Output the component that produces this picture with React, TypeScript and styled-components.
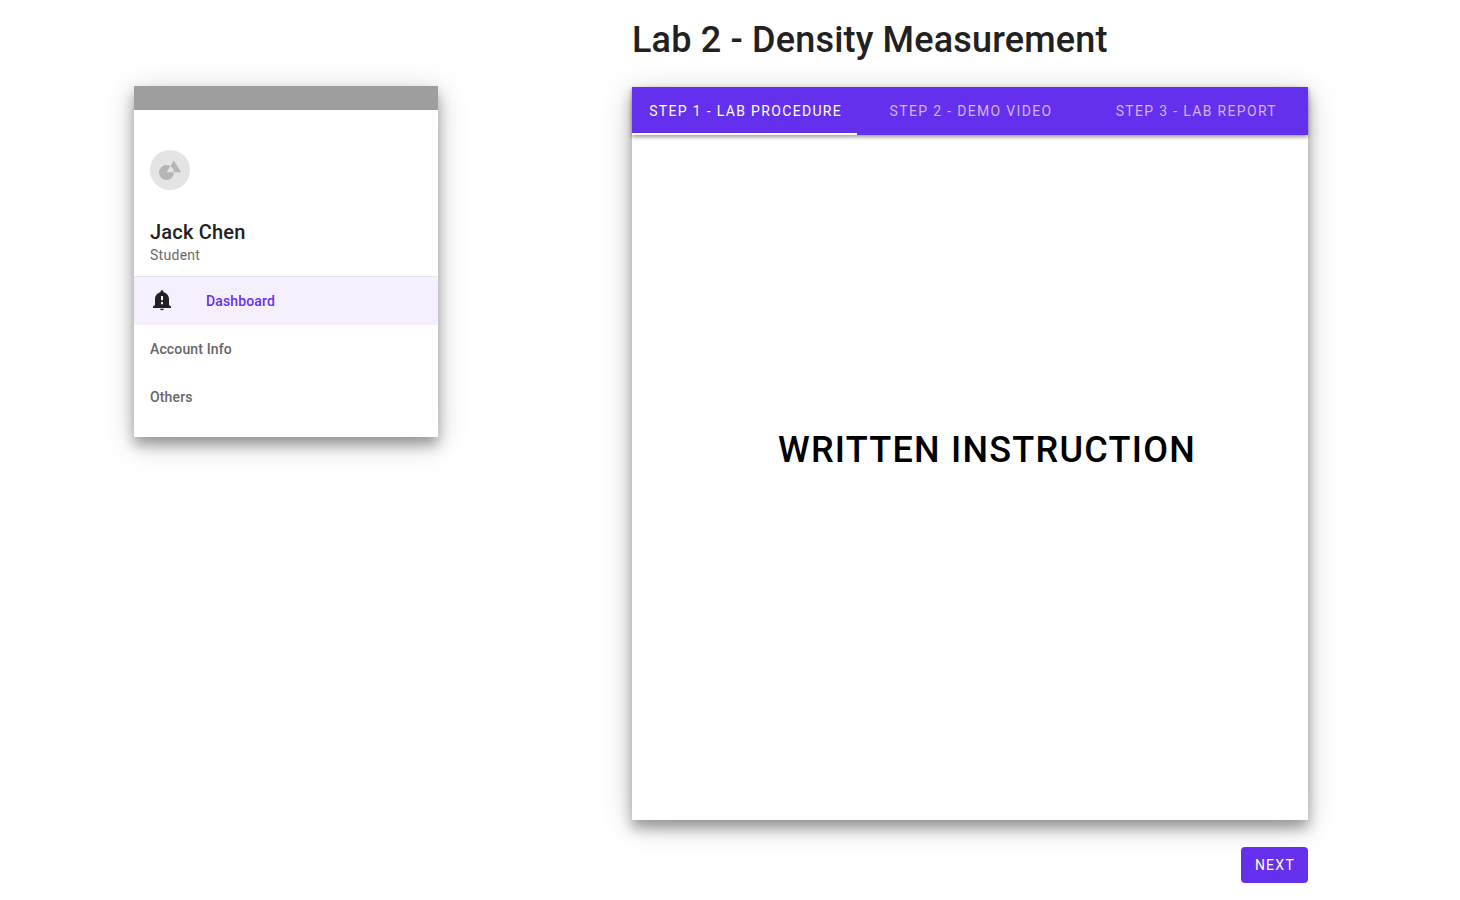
import React, { useState } from "react";
import styled, { createGlobalStyle } from "styled-components";

const GlobalStyle = createGlobalStyle`
  *, *::before, *::after { box-sizing: border-box; }
  body {
    margin: 0;
    background: #fff;
    color: #212121;
    font-family: Roboto, "Liberation Sans", sans-serif;
  }
`;

const cardShadow = "0 8px 12px rgba(0, 0, 0, 0.32), 0 6px 30px rgba(0, 0, 0, 0.2)";
const primary = "#6430ee";

const Page = styled.div`
  display: flex;
  align-items: flex-start;
  gap: 194px;
  min-height: 100vh;
  padding: 0 152px 0 134px;
`;

const Drawer = styled.aside`
  flex: 0 0 304px;
  margin-top: 86px;
  padding-bottom: 16px;
  background: #fff;
  box-shadow: ${cardShadow};
`;

const StatusBar = styled.div`
  height: 24px;
  background: #9e9e9e;
`;

const Profile = styled.header`
  padding: 40px 16px 10px;
  border-bottom: 1px solid #e9e5ef;
`;

const Avatar = styled.svg`
  display: block;
  width: 40px;
  height: 40px;
  margin-bottom: 30px;
`;

const UserName = styled.h2`
  margin: 0;
  font-size: 20px;
  line-height: 24px;
  font-weight: 500;
  letter-spacing: 0.01em;
`;

const UserRole = styled.p`
  margin: 0;
  color: #6b6b6b;
  font-size: 14px;
  line-height: 22px;
  letter-spacing: 0.02em;
`;

const NavList = styled.ul`
  margin: 0;
  padding: 0;
  list-style: none;
`;

const NavLink = styled.a<{ $active?: boolean }>`
  display: flex;
  align-items: center;
  gap: 32px;
  height: 48px;
  padding: 0 16px;
  background: ${({ $active }) => ($active ? "#f6f0fe" : "transparent")};
  color: ${({ $active }) => ($active ? primary : "#666")};
  font-size: 14px;
  line-height: 20px;
  font-weight: 500;
  letter-spacing: 0.01em;
  text-decoration: none;
`;

const NavIcon = styled.svg`
  width: 24px;
  height: 24px;
  fill: #212121;
`;

const Main = styled.main`
  display: flex;
  flex: 1;
  flex-direction: column;
  min-width: 0;
  min-height: 100vh;
  padding: 16px 0 17px;
`;

const Title = styled.h1`
  margin: 0 0 23px;
  font-size: 36px;
  line-height: 48px;
  font-weight: 500;
  letter-spacing: 0.005em;
`;

const LabCard = styled.section`
  display: flex;
  flex: 1;
  flex-direction: column;
  background: #fff;
  box-shadow: ${cardShadow};
`;

const TabList = styled.div`
  display: grid;
  grid-template-columns: repeat(3, 1fr);
  height: 48px;
  background: ${primary};
  box-shadow: 0 2px 4px rgba(0, 0, 0, 0.4);
`;

const Tab = styled.button<{ $active: boolean }>`
  padding: 2px 0 0 2px;
  border: 0;
  border-bottom: 2px solid ${({ $active }) => ($active ? "#fff" : "transparent")};
  background: none;
  color: ${({ $active }) => ($active ? "#fff" : "#d2b4fa")};
  font: 400 14px/20px Roboto, "Liberation Sans", sans-serif;
  letter-spacing: 0.095em;
  text-transform: uppercase;
  white-space: nowrap;
  cursor: pointer;
`;

const TabPanel = styled.div`
  display: flex;
  flex: 1;
  align-items: center;
  justify-content: center;
  padding: 0 0 56px 34px;
`;

const PanelHeading = styled.h2`
  margin: 0;
  color: #000;
  font-size: 36px;
  line-height: 48px;
  font-weight: 500;
  letter-spacing: 0.035em;
  text-transform: uppercase;
`;

const NextButton = styled.button`
  align-self: flex-end;
  height: 36px;
  margin-top: 27px;
  padding: 0 13px 0 14px;
  border: 0;
  border-radius: 4px;
  background: ${primary};
  color: #fff;
  font: 400 14px/20px Roboto, "Liberation Sans", sans-serif;
  letter-spacing: 0.09em;
  text-transform: uppercase;
  cursor: pointer;
`;

const steps = [
  { label: "Step 1 - Lab Procedure", heading: "Written Instruction" },
  { label: "Step 2 - Demo Video", heading: "Demo Video" },
  { label: "Step 3 - Lab Report", heading: "Lab Report" },
];

export default function App() {
  const [step, setStep] = useState(0);

  return (
    <>
      <GlobalStyle />
      <Page>
        <Drawer>
          <StatusBar />
          <Profile>
            <Avatar viewBox="0 0 40 40" aria-hidden="true">
              <circle cx="20" cy="20" r="20" fill="#e4e4e4" />
              <path
                fill="#b5b5b5"
                fillRule="evenodd"
                d="M9 22.5a7.5 7.5 0 1 0 15 0a7.5 7.5 0 1 0 -15 0zM23.8 10.5L31 22.2H16.6z"
              />
            </Avatar>
            <UserName>Jack Chen</UserName>
            <UserRole>Student</UserRole>
          </Profile>
          <nav aria-label="Main">
            <NavList>
              <li>
                <NavLink href="#dashboard" $active aria-current="page">
                  <NavIcon viewBox="0 0 24 24" aria-hidden="true">
                    <path
                      fillRule="evenodd"
                      d="M12 1.200c-.9 0-1.500.7-1.500 1.500v.5C7.300 3.900 5 6.600 5 10v6l-2 1.500V19h18v-1.500L19 16V10c0-3.400-2.300-6.100-5.500-6.800v-.5c0-.8-.6-1.500-1.500-1.500zM11 7h2v4.200h-2zM11 13.100h2v2.100h-2zM10.200 19.700h3.600a1.800 1.600 0 0 1-3.600 0z"
                    />
                  </NavIcon>
                  Dashboard
                </NavLink>
              </li>
              <li><NavLink href="#account">Account Info</NavLink></li>
              <li><NavLink href="#others">Others</NavLink></li>
            </NavList>
          </nav>
        </Drawer>
        <Main>
          <Title>Lab 2 - Density Measurement</Title>
          <LabCard>
            <TabList role="tablist" aria-label="Lab steps">
              {steps.map(({ label }, i) => (
                <Tab
                  key={label}
                  id={`tab-${i}`}
                  type="button"
                  role="tab"
                  aria-selected={i === step}
                  aria-controls="lab-panel"
                  $active={i === step}
                  onClick={() => setStep(i)}
                >
                  {label}
                </Tab>
              ))}
            </TabList>
            <TabPanel id="lab-panel" role="tabpanel" aria-labelledby={`tab-${step}`}>
              <PanelHeading>{steps[step].heading}</PanelHeading>
            </TabPanel>
          </LabCard>
          <NextButton type="button" onClick={() => setStep((s) => Math.min(s + 1, steps.length - 1))}>
            Next
          </NextButton>
        </Main>
      </Page>
    </>
  );
}
